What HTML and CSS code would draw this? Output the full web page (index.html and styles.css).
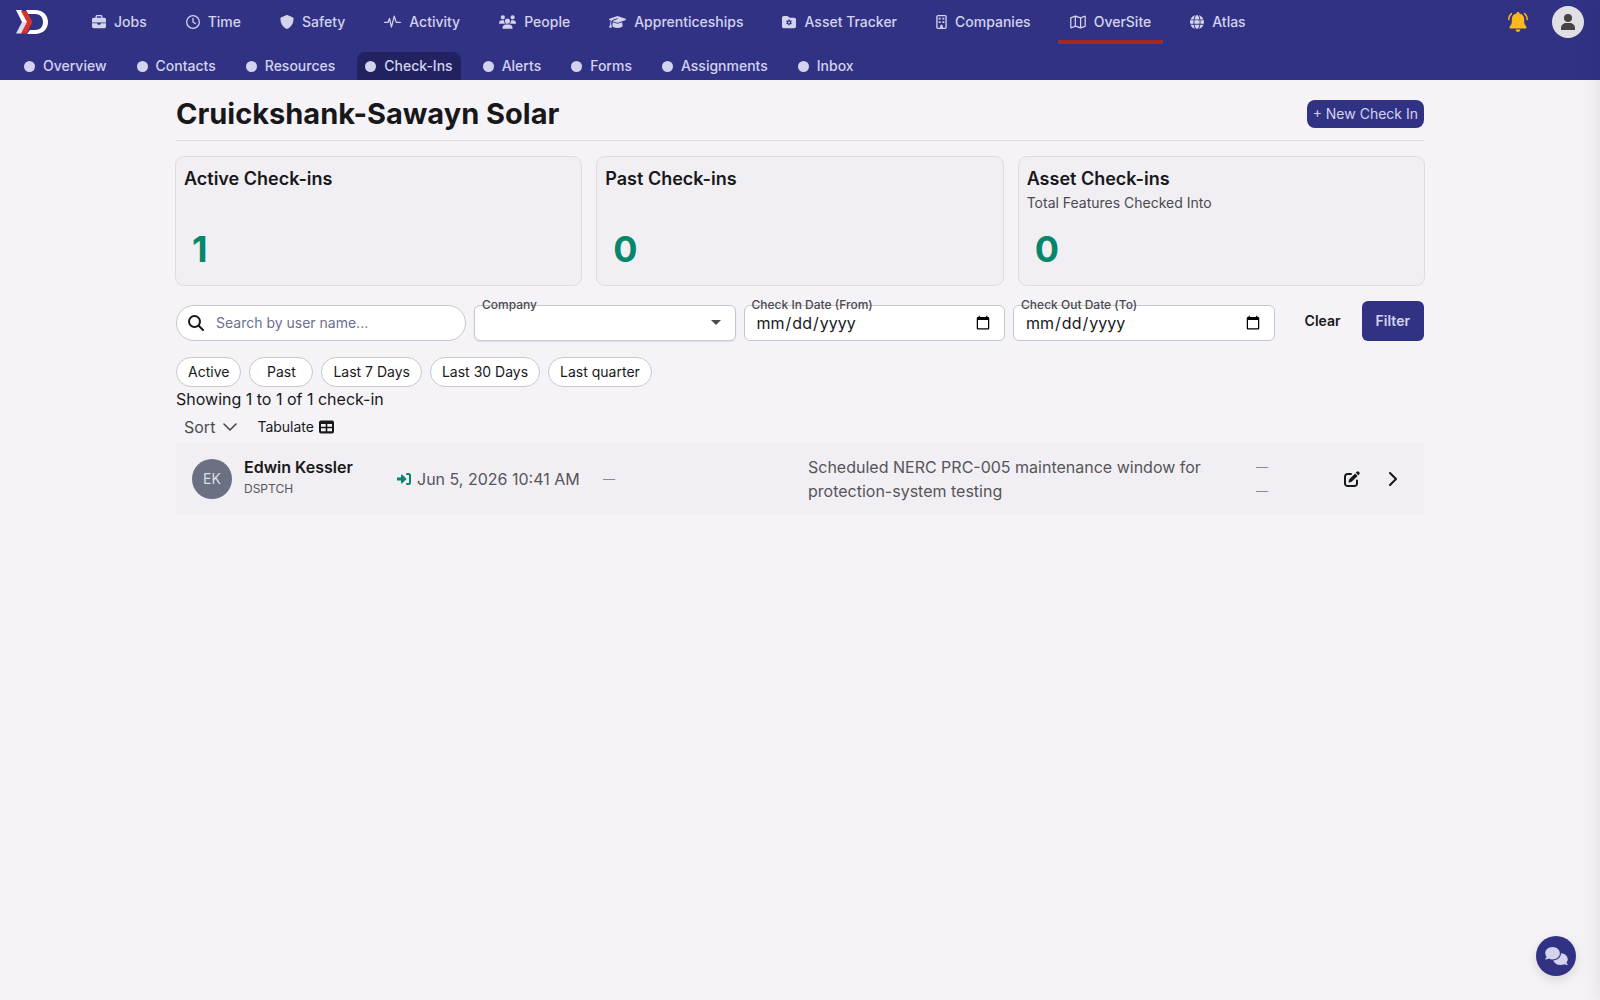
FILE: index.html
```html
<!DOCTYPE html>
<html lang="en-US">
<head>
    <meta charset="UTF-8">
    <meta name="viewport" content="width=device-width, initial-scale=1.0">
    <title>Check-Ins</title>
    <link rel="stylesheet" href="styles.css">
</head>
<body>
    <header class="topbar">
        <div class="topbar-row">
            <a href="#" class="logo" aria-label="Home">
                <svg width="32" height="24" viewBox="0 0 32 24">
                    <path d="M10 0h9c8 0 13 5 13 12s-5 12-13 12h-8l3-4h5c5 0 8-3 8-8s-3-8-8-8h-7z" fill="#fff"/>
                    <path d="M0 0h5.500l6 12H6z" fill="#fff"/>
                    <path d="M6 12h5.500l-6 11.500H0z" fill="#dcdcec"/>
                    <path d="M5 1h5.500l6 11-6 11.500H5L11 12z" fill="#d8352a"/>
                </svg>
            </a>
            <nav class="main-nav">
                <a href="#">
                    <svg class="icon" viewBox="0 0 512 512"><path d="M176 56v40h160V56c0-4-4-8-8-8H184c-4 0-8 4-8 8zm-48 40V56c0-31 25-56 56-56h144c31 0 56 25 56 56v40h64c35 0 64 29 64 64v112H0V160c0-35 29-64 64-64zM0 304h192v16c0 18 14 32 32 32h64c18 0 32-14 32-32v-16h192v112c0 35-29 64-64 64H64c-35 0-64-29-64-64z"/></svg>
                    Jobs
                </a>
                <a href="#">
                    <svg class="icon" viewBox="0 0 512 512"><path d="M464 256A208 208 0 1 1 48 256a208 208 0 1 1 416 0zM0 256a256 256 0 1 0 512 0A256 256 0 1 0 0 256zM232 120V256c0 8 4 15.500 10.700 20l96 64c11 7.400 25.900 4.400 33.300-6.700s4.400-25.900-6.700-33.300L280 243.200V120c0-13.300-10.700-24-24-24s-24 10.700-24 24z"/></svg>
                    Time
                </a>
                <a href="#">
                    <svg class="icon" viewBox="0 0 512 512"><path d="M256 0c5 0 9 1 13 3l188 80c22 9 39 31 39 57-1 99-41 281-214 363-16 8-36 8-52 0C57 421 17 239 16 140c0-26 17-48 39-57L243 3c4-2 8-3 13-3z"/></svg>
                    Safety
                </a>
                <a href="#">
                    <svg class="icon icon-wide" viewBox="0 0 640 512"><path d="M24 272h128l56-150 72 330 104-420 76 240h156" fill="none" stroke="currentColor" stroke-width="46" stroke-linecap="round" stroke-linejoin="round"/></svg>
                    Activity
                </a>
                <a href="#">
                    <svg class="icon icon-wide" viewBox="0 0 640 512"><path d="M144 0a80 80 0 1 1 0 160 80 80 0 1 1 0-160zm368 0a80 80 0 1 1 0 160 80 80 0 1 1 0-160zM0 299c0-59 48-107 107-107h42c16 0 31 4 45 10-1 7-2 14-2 22 0 38 17 72 43 96H21c-12 0-21-10-21-21zm405 21c27-24 43-58 43-96 0-8-1-15-2-22 14-6 29-10 45-10h42c59 0 107 48 107 107 0 12-10 21-21 21zM224 224a96 96 0 1 1 192 0 96 96 0 1 1-192 0zM128 485c0-73 60-133 133-133h118c73 0 133 60 133 133 0 15-12 27-27 27H155c-15 0-27-12-27-27z"/></svg>
                    People
                </a>
                <a href="#">
                    <svg class="icon icon-wide" viewBox="0 0 640 512"><path d="M320 32c-8 0-16 1-24 4L16 137c-10 4-16 13-16 23s6 19 16 23l58 21c-16 25-26 55-26 88v28c0 28-11 58-23 81-6 13-14 26-22 38-3 4-4 9-2 14s5 8 10 9l64 16c4 1 9 0 13-2s6-6 7-10c9-43 4-82-3-109-3-14-8-29-14-42v-23c0-30 10-58 28-81 12-15 29-28 49-36l157-61c8-3 18 1 21 9s-1 17-9 20l-157 62c-12 5-23 12-32 21l161 58c8 3 16 4 24 4s16-1 24-4l280-101c10-4 16-13 16-23s-6-19-16-23L344 36c-8-3-16-4-24-4zM128 408c0 35 86 72 192 72s192-37 192-72l-15-145-142 51c-12 4-23 6-35 6s-24-2-35-6l-142-51z"/></svg>
                    Apprenticeships
                </a>
                <a href="#">
                    <svg class="icon" viewBox="0 0 512 512"><path fill-rule="evenodd" d="M64 32h117c17 0 33 7 45 19l26 26c12 12 28 19 45 19h151c35 0 64 29 64 64v256c0 35-29 64-64 64H64c-35 0-64-29-64-64V96c0-35 29-64 64-64zm168 132v30l-28 16-27-15-25 43 27 16v32l-27 16 25 43 27-15 28 16v30h48v-30l28-16 27 15 25-43-27-16v-32l27-16-25-43-27 15-28-16v-30zm24 70a36 36 0 1 1 0 72 36 36 0 1 1 0-72z"/></svg>
                    Asset Tracker
                </a>
                <a href="#">
                    <svg class="icon icon-narrow" viewBox="0 0 384 512"><path fill-rule="evenodd" d="M64 0h256c35 0 64 29 64 64v384c0 35-29 64-64 64H64c-35 0-64-29-64-64V64C0 29 29 0 64 0zm0 48c-9 0-16 7-16 16v384c0 9 7 16 16 16h80v-64c0-27 21-48 48-48s48 21 48 48v64h80c9 0 16-7 16-16V64c0-9-7-16-16-16zM88 104h72v64H88zm136 0h72v64h-72zM88 232h72v64H88zm136 0h72v64h-72z"/></svg>
                    Companies
                </a>
                <a href="#" class="active">
                    <svg class="icon icon-map" viewBox="0 0 576 512"><path d="M24 120c0-10 5-18 14-22L192 40l192 64 144-58c12-5 24 3 24 16v330c0 10-5 18-14 22l-154 58-192-64-144 58c-12 5-24-3-24-16zM192 40v368M384 104v368" fill="none" stroke="currentColor" stroke-width="46" stroke-linejoin="round"/></svg>
                    OverSite
                </a>
                <a href="#">
                    <svg class="icon" viewBox="0 0 512 512"><path d="M352 256c0 22-1 44-3 64H163c-2-20-3-42-3-64s1-44 3-64h186c2 20 3 42 3 64zm29-64h123c5 20 8 42 8 64s-3 44-8 64H381c2-21 3-42 3-64s-1-43-3-64zm112-32H377c-10-64-30-117-55-152 78 21 142 77 171 152zm-149 0H168c6-36 15-68 27-95 10-23 22-40 33-51s20-14 28-14 17 3 28 14 23 28 33 51c12 27 21 59 27 95zm-209 0H19C48 85 112 29 190 8c-25 35-45 88-55 152zM8 192h123c-2 21-3 42-3 64s1 43 3 64H8c-5-20-8-42-8-64s3-44 8-64zm187 255c-12-27-21-59-27-95h176c-6 36-15 68-27 95-10 23-22 40-33 51s-20 14-28 14-17-3-28-14-23-28-33-51zM135 352c10 64 30 117 55 152-78-21-142-77-171-152zm358 0c-29 75-93 131-171 152 25-35 45-88 55-152z"/></svg>
                    Atlas
                </a>
            </nav>
            <div class="user-tools">
                <button class="bell" aria-label="Notifications">
                    <svg width="20" height="20" viewBox="0 0 20 20"><path d="M10 0c1 0 1.500.6 1.500 1.500 3 .7 4.700 2.800 4.700 6v2.200c0 2 .8 3.200 2 4.700.8 1 .3 2.100-.9 2.100H2.700c-1.200 0-1.700-1.100-.9-2.100 1.200-1.500 2-2.700 2-4.700V7.500c0-3.200 1.700-5.300 4.700-6C8.500.6 9 0 10 0zM7.600 17.600h4.800a2.400 2.400 0 0 1-4.800 0z" fill="#ffb81c"/><path d="M3.400 1.600C1.800 3 .9 5 .8 7.400M16.600 1.600C18.200 3 19.100 5 19.200 7.400" fill="none" stroke="#ffb81c" stroke-width="1.500" stroke-linecap="round"/></svg>
                </button>
                <button class="profile" aria-label="Profile">
                    <svg width="14" height="16" viewBox="0 0 14 16"><circle cx="7" cy="4" r="4"/><path d="M0 16v-2c0-3 2.500-5 5.500-5h3c3 0 5.500 2 5.500 5v2z"/></svg>
                </button>
            </div>
        </div>
        <nav class="sub-nav">
            <a href="#">Overview</a>
            <a href="#">Contacts</a>
            <a href="#">Resources</a>
            <a href="#" class="active">Check-Ins</a>
            <a href="#">Alerts</a>
            <a href="#">Forms</a>
            <a href="#">Assignments</a>
            <a href="#">Inbox</a>
        </nav>
    </header>

    <main class="container">
        <div class="page-header">
            <h1>Cruickshank-Sawayn Solar</h1>
            <button class="btn-new">+ New Check In</button>
        </div>

        <section class="stats">
            <div class="stat-card">
                <h2>Active Check-ins</h2>
                <div class="stat-value">1</div>
            </div>
            <div class="stat-card">
                <h2>Past Check-ins</h2>
                <div class="stat-value">0</div>
            </div>
            <div class="stat-card">
                <h2>Asset Check-ins</h2>
                <p>Total Features Checked Into</p>
                <div class="stat-value">0</div>
            </div>
        </section>

        <form class="filters">
            <div class="search">
                <svg width="16" height="16" viewBox="0 0 16 16"><path d="M11 11l4 4M12 6.500a5.500 5.500 0 1 1-11 0 5.500 5.500 0 0 1 11 0z" fill="none" stroke="currentColor" stroke-width="2" stroke-linecap="round"/></svg>
                <input type="text" placeholder="Search by user name..." aria-label="Search by user name">
            </div>
            <div class="field">
                <label for="company">Company</label>
                <select id="company"><option></option></select>
                <svg class="caret" width="10" height="5" viewBox="0 0 10 5"><path d="M0 0h10L5 5z"/></svg>
            </div>
            <div class="field">
                <label for="date-from">Check In Date (From)</label>
                <input type="date" id="date-from">
            </div>
            <div class="field">
                <label for="date-to">Check Out Date (To)</label>
                <input type="date" id="date-to">
            </div>
            <div class="filter-actions">
                <button type="reset" class="btn btn-clear">Clear</button>
                <button type="button" class="btn btn-filter">Filter</button>
            </div>
        </form>

        <div class="chips">
            <button>Active</button>
            <button>Past</button>
            <button>Last 7 Days</button>
            <button>Last 30 Days</button>
            <button>Last quarter</button>
        </div>

        <p class="result-count">Showing 1 to 1 of 1 check-in</p>

        <div class="list-tools">
            <button class="sort">
                Sort
                <svg width="14" height="8" viewBox="0 0 14 8"><path d="M1 1l6 6 6-6" fill="none" stroke="currentColor" stroke-width="1.600" stroke-linecap="round" stroke-linejoin="round"/></svg>
            </button>
            <button class="tabulate">
                Tabulate
                <svg width="15" height="14" viewBox="0 0 15 14"><path fill-rule="evenodd" d="M2 .5h11a2 2 0 0 1 2 2v9a2 2 0 0 1-2 2H2a2 2 0 0 1-2-2v-9a2 2 0 0 1 2-2zM2 4v2.700h4.700V4zm6.300 0v2.700H13V4zM2 8.300v3h4.700v-3zm6.300 0v3H13v-3z"/></svg>
            </button>
        </div>

        <ul class="checkins">
            <li class="checkin">
                <div class="person">
                    <div class="avatar">EK</div>
                    <div class="person-text">
                        <div class="name">Edwin Kessler</div>
                        <div class="role">DSPTCH</div>
                    </div>
                </div>
                <div class="time-in">
                    <svg width="14" height="12" viewBox="0 0 14 12"><path d="M0 4.500h4V2.200c0-.7.800-1 1.300-.5l3.900 3.700c.3.300.3.900 0 1.200l-3.900 3.700c-.5.500-1.300.2-1.300-.5V7.500H0z"/><path d="M10 1h1.500A1.500 1.500 0 0 1 13 2.500v7a1.500 1.500 0 0 1-1.500 1.500H10" fill="none" stroke="currentColor" stroke-width="2" stroke-linecap="round"/></svg>
                    Jun 5, 2026 10:41 AM
                </div>
                <div class="dash">—</div>
                <div class="reason">Scheduled NERC PRC-005 maintenance window for protection-system testing</div>
                <div class="dash">—<br>—</div>
                <div class="row-actions">
                    <button aria-label="Edit">
                        <svg width="16" height="16" viewBox="0 0 16 16"><path d="M7 3H3.500A2.500 2.500 0 0 0 1 5.500v7A2.500 2.500 0 0 0 3.500 15h7a2.500 2.500 0 0 0 2.500-2.500V9.500" fill="none" stroke="currentColor" stroke-width="2" stroke-linecap="round"/><path d="M12.800.7a1.500 1.500 0 0 1 2 0l.5.500a1.500 1.500 0 0 1 0 2l-1 1L11.800 1.700zM11.100 2.400l2.500 2.500-5.400 5.400c-.3.300-.6.500-1 .6L5 11.500c-.3.100-.6-.2-.5-.5l.6-2.200c.1-.4.300-.7.600-1z"/></svg>
                    </button>
                    <button aria-label="Open">
                        <svg width="8" height="14" viewBox="0 0 8 14"><path d="M1 1l6 6-6 6" fill="none" stroke="currentColor" stroke-width="2" stroke-linecap="round" stroke-linejoin="round"/></svg>
                    </button>
                </div>
            </li>
        </ul>
    </main>

    <button class="chat" aria-label="Chat">
        <svg width="23" height="18" viewBox="0 0 640 512"><path d="M208 352c115 0 208-79 208-176S323 0 208 0 0 79 0 176c0 38 15 74 40 103-4 9-9 18-14 25-5 8-9 14-13 18-2 2-3 3-4 4l-1 1c-8 6-10 13-8 19 2 5 8 6 12 6 22 0 45-6 63-13 10-4 19-8 26-12 32 16 68 25 107 25zm240-176c0 112-99 197-220 207 25 76 107 129 204 129 39 0 75-9 107-24 7 3 16 8 26 12 18 7 41 12 63 12 5 0 10-3 11-8s0-10-4-13c-1-1-3-2-5-5-4-4-8-10-13-18-5-7-10-16-14-25 23-27 37-60 37-95 0-93-85-168-192-172z"/></svg>
    </button>
    <aside class="drawer"></aside>
</body>
</html>
```
FILE: styles.css
```css
* {
    box-sizing: border-box;
}

body {
    margin: 0;
    font-family: Inter, "Liberation Sans", sans-serif;
    font-size: 16px;
    line-height: 24px;
    color: #18181b;
    background-color: #f5f3f7;
}

h1, h2, p, ul {
    margin: 0;
    padding: 0;
}

a {
    color: inherit;
    text-decoration: none;
}

button, input, select {
    font: inherit;
    color: inherit;
}

button {
    padding: 0;
    border: none;
    background: none;
    cursor: pointer;
}

svg {
    display: block;
    flex-shrink: 0;
    fill: currentColor;
}

/* Header */
.topbar {
    background-color: #323285;
    color: #d3d3ee;
    font-size: 14px;
    font-weight: 500;
    line-height: 20px;
}

.topbar-row {
    display: flex;
    align-items: center;
    height: 44px;
    padding: 0 16px;
}

.main-nav {
    display: flex;
    flex: 1;
    gap: 15px;
    margin-left: 32px;
}

.main-nav a {
    display: flex;
    align-items: center;
    gap: 8px;
    height: 44px;
    padding: 4px 12px 0;
    border-bottom: 4px solid transparent;
}

.main-nav a.active {
    border-bottom-color: #a7281e;
}

.icon {
    width: 14px;
    height: 14px;
}

.icon-wide {
    width: 17px;
}

.icon-map {
    width: 16px;
}

.icon-narrow {
    width: 11px;
}

.user-tools {
    display: flex;
    align-items: center;
    gap: 24px;
}

.profile {
    display: flex;
    align-items: center;
    justify-content: center;
    width: 32px;
    height: 32px;
    border-radius: 50%;
    background-color: #e0dfe3;
    color: #444;
}

.sub-nav {
    display: flex;
    gap: 14px;
    padding: 8px 16px 0;
}

.sub-nav a {
    display: flex;
    align-items: center;
    gap: 8px;
    height: 28px;
    padding: 0 8px;
    border-radius: 8px 8px 0 0;
}

.sub-nav a::before {
    content: "";
    width: 11px;
    height: 11px;
    border-radius: 50%;
    background-color: currentColor;
}

.sub-nav a.active {
    background-color: #222260;
}

/* Page */
.container {
    max-width: 1280px;
    margin: 0 auto;
    padding: 16px;
}

.page-header {
    display: flex;
    align-items: center;
    justify-content: space-between;
    padding-bottom: 8px;
    border-bottom: 1px solid #dddce0;
}

h1 {
    font-size: 29px;
    line-height: 36px;
    font-weight: 700;
}

.btn-new {
    height: 28px;
    padding: 0 6px;
    border-radius: 8px;
    background-color: #323285;
    color: #d3d3ee;
    font-size: 14px;
}

.stats {
    display: grid;
    grid-template-columns: repeat(3, 1fr);
    gap: 16px;
    margin-top: 16px;
}

.stat-card {
    display: flex;
    flex-direction: column;
    min-height: 128px;
    padding: 8px;
    border-radius: 8px;
    background-color: #f1eff3;
    box-shadow: 0 0 0 1px #dddce0;
}

.stat-card h2 {
    font-size: 18px;
    line-height: 28px;
    font-weight: 600;
}

.stat-card p {
    font-size: 14px;
    line-height: 20px;
    color: #4a4a4f;
}

.stat-value {
    margin-top: auto;
    padding: 8px;
    font-size: 36px;
    line-height: 40px;
    font-weight: 700;
    color: #05876b;
}

/* Filters */
.filters {
    display: grid;
    grid-template-columns: 290px 1fr 1fr 1fr auto;
    align-items: end;
    gap: 8px;
    margin-top: 16px;
}

.search {
    display: flex;
    align-items: center;
    gap: 12px;
    height: 36px;
    padding: 0 11px;
    border: 1px solid #c8c6cc;
    border-radius: 18px;
    background-color: #fff;
}

.search input {
    flex: 1;
    min-width: 0;
    padding: 0;
    border: none;
    outline: none;
    background: none;
    font-size: 14px;
}

.search input::placeholder {
    color: #6b7090;
}

.field {
    position: relative;
}

.field label {
    position: absolute;
    top: -8px;
    left: 8px;
    font-size: 12px;
    line-height: 16px;
    font-weight: 500;
    color: #4a4a4f;
}

.field input, .field select {
    display: block;
    width: 100%;
    height: 36px;
    padding: 0 11px;
    border: 1px solid #c8c6cc;
    border-radius: 6px;
    background-color: #fff;
}

.field select {
    appearance: none;
    box-shadow: 0 1px 2px rgba(0, 0, 0, 0.08);
}

.caret {
    position: absolute;
    top: 15px;
    right: 15px;
    color: #4a4a4f;
    pointer-events: none;
}

.filter-actions {
    display: flex;
    gap: 7px;
    padding-left: 8px;
}

.btn {
    height: 40px;
    padding: 0 14px;
    border-radius: 6px;
    font-size: 14px;
    font-weight: 600;
}

.btn-filter {
    background-color: #323285;
    color: #d3d3ee;
}

.chips {
    display: flex;
    gap: 8px;
    margin-top: 16px;
}

.chips button {
    min-width: 64px;
    height: 30px;
    padding: 0 11px;
    border: 1px solid #c8c6cc;
    border-radius: 15px;
    background-color: #fff;
    font-size: 14px;
}

/* List */
.list-tools {
    display: flex;
    align-items: center;
    gap: 20px;
    height: 32px;
    padding: 0 8px;
}

.list-tools button {
    display: flex;
    align-items: center;
    gap: 8px;
}

.list-tools .sort {
    color: #4a4a4f;
}

.list-tools .tabulate {
    gap: 5px;
    font-size: 14px;
}

.checkins {
    list-style: none;
}

.checkin {
    display: grid;
    grid-template-columns: 205px 206px 205px 1fr 72px 80px;
    align-items: center;
    padding: 12px 16px;
    background-color: #f1eff3;
    color: #55555a;
}

.person {
    display: flex;
    align-items: center;
    gap: 12px;
}

.avatar {
    display: flex;
    align-items: center;
    justify-content: center;
    width: 40px;
    height: 40px;
    border-radius: 50%;
    background-color: #6b7083;
    color: #dddde4;
    font-size: 14px;
}

.person-text {
    height: 48px;
}

.name {
    font-weight: 600;
    color: #18181b;
}

.role {
    font-size: 12px;
    line-height: 20px;
}

.time-in {
    display: flex;
    align-items: center;
    gap: 6px;
}

.time-in svg {
    color: #05876b;
}

.dash {
    font-size: 12px;
    color: #88888d;
}

.reason {
    max-width: 400px;
}

.row-actions {
    display: flex;
    align-items: center;
    justify-content: flex-end;
    gap: 29px;
    padding-right: 11px;
    color: #18181b;
}

/* Floating bits */
.chat {
    position: fixed;
    right: 24px;
    bottom: 24px;
    display: flex;
    align-items: center;
    justify-content: center;
    width: 40px;
    height: 40px;
    border-radius: 50%;
    background-color: #323285;
    color: #d3d3ee;
    box-shadow: 0 4px 12px rgba(0, 0, 0, 0.12);
}

.drawer {
    position: fixed;
    top: 0;
    left: 100%;
    width: 320px;
    height: 100%;
    box-shadow: 0 0 20px rgba(0, 0, 0, 0.1);
}
```
